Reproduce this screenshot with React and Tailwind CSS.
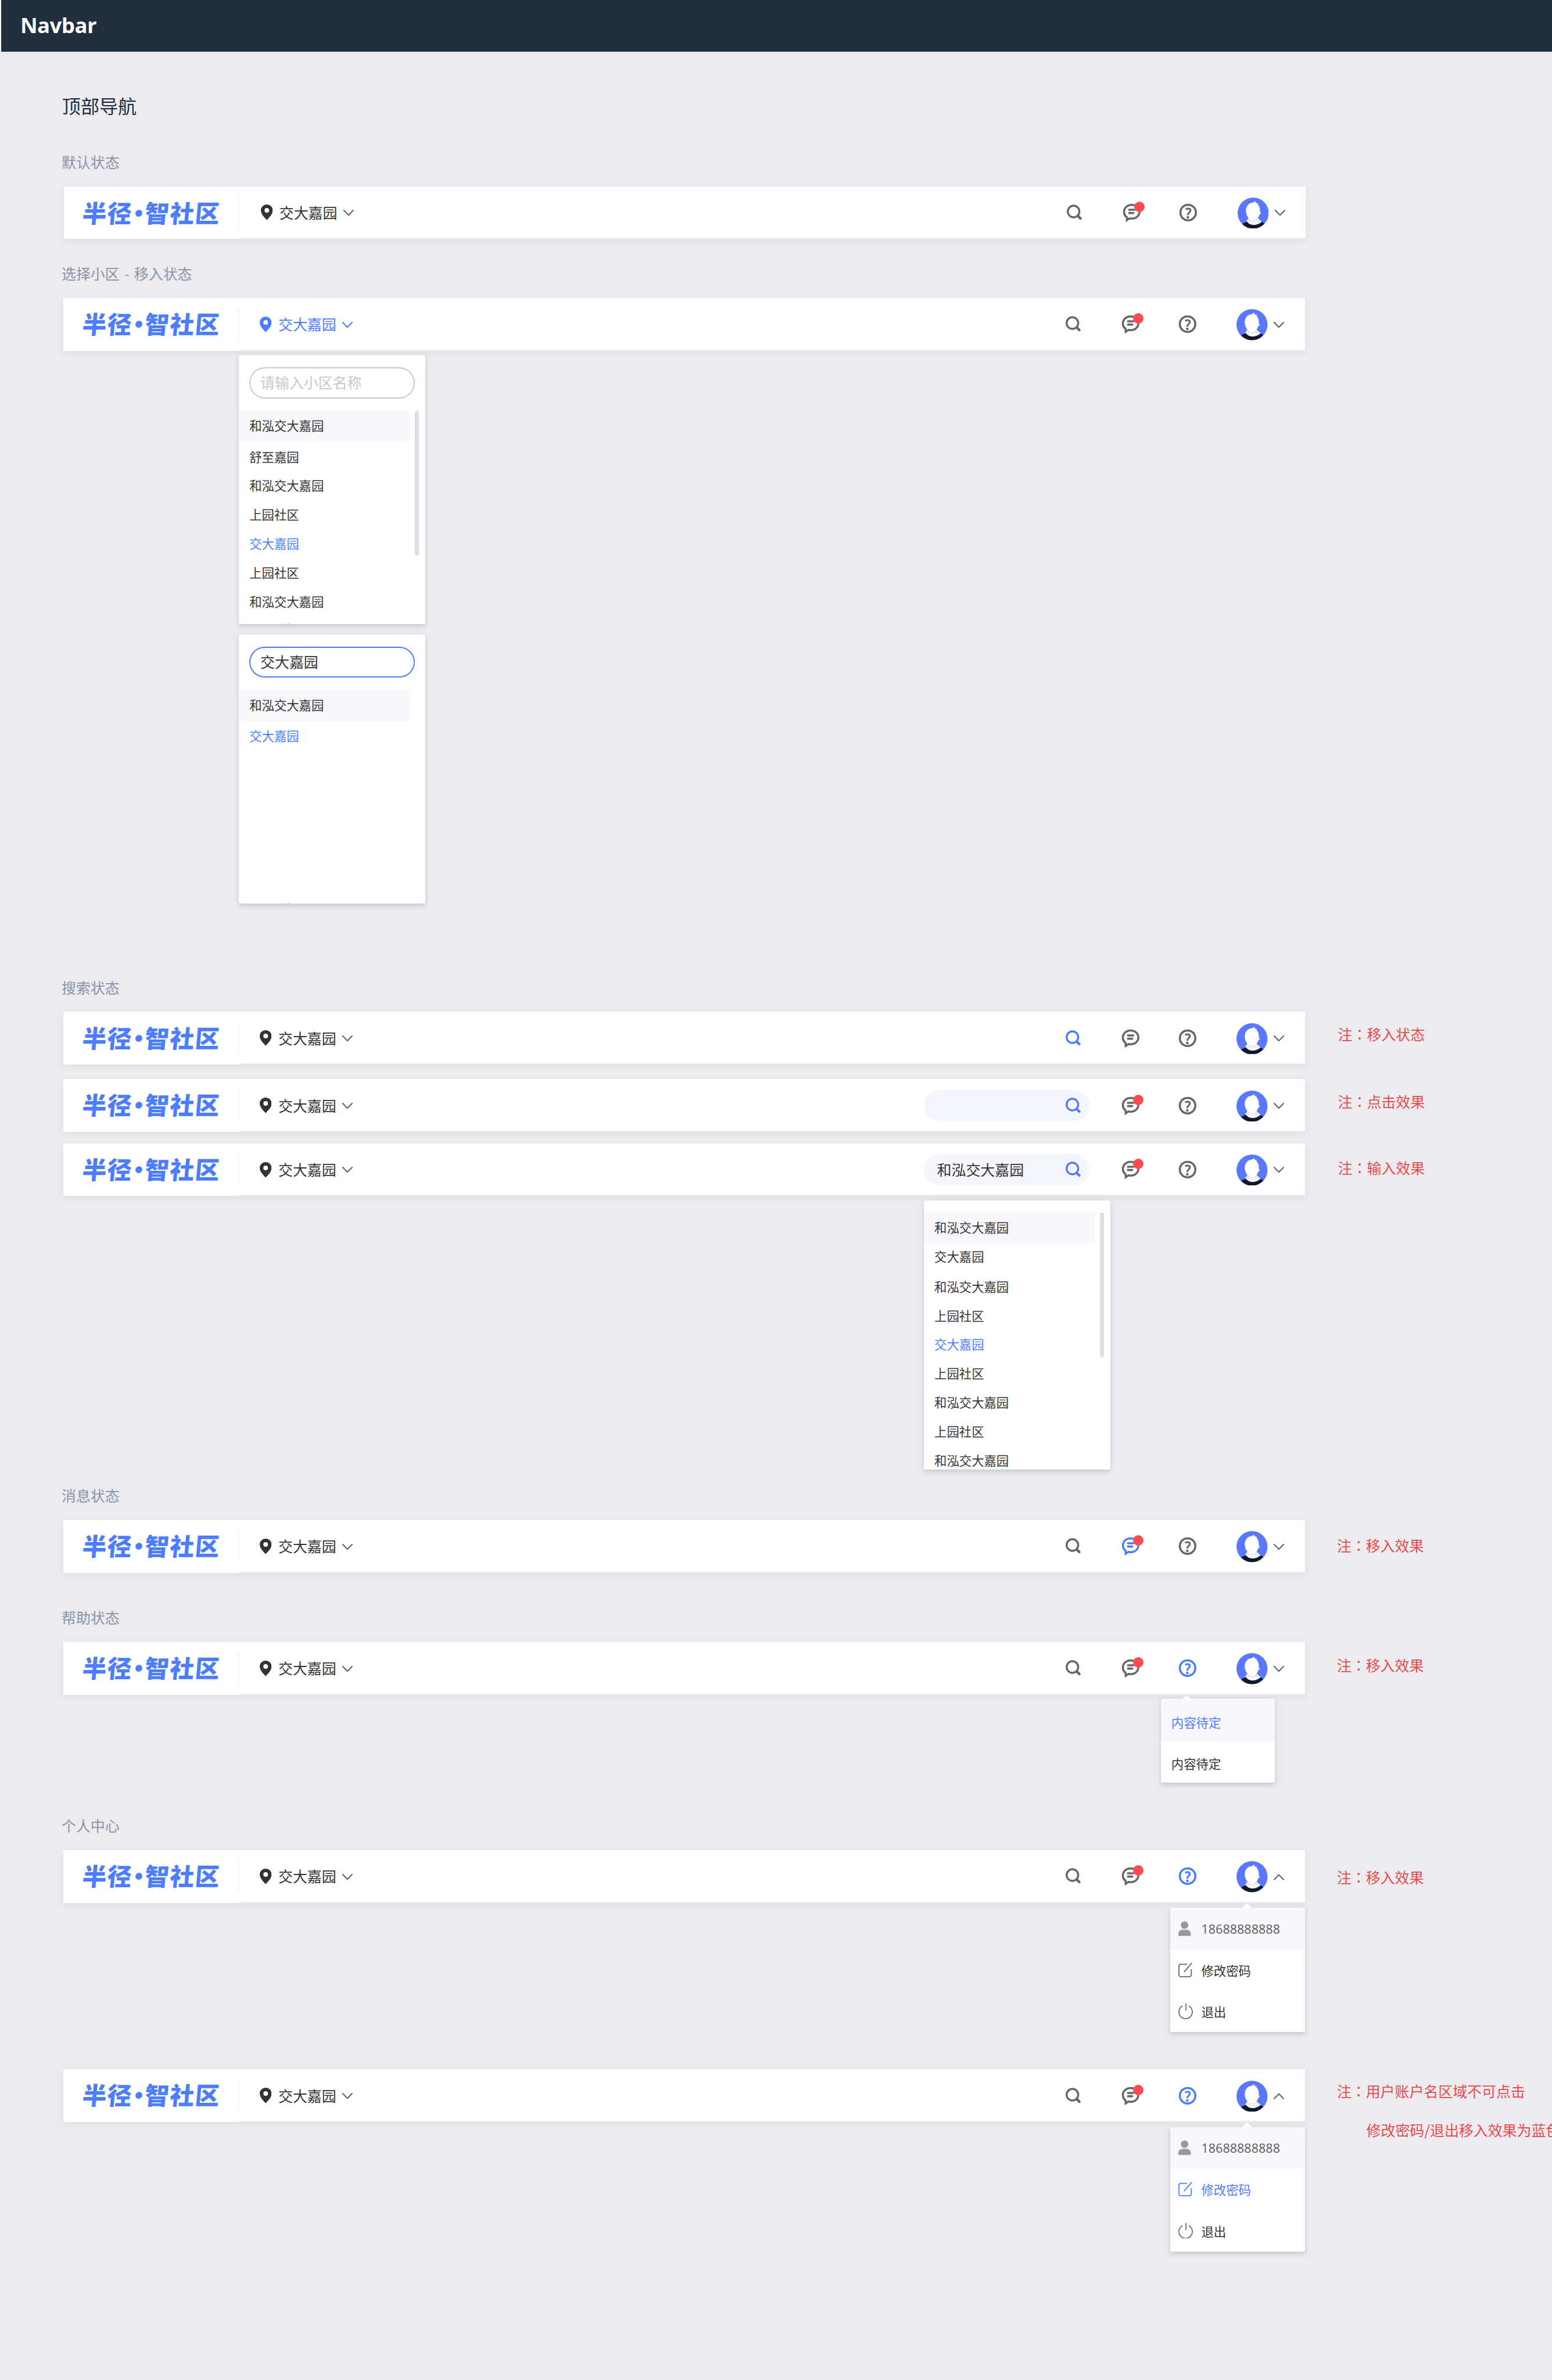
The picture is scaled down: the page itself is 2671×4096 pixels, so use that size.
import React from "react";
import { clsx } from "clsx";

const BLUE = "text-[#4c7dff]";

function PinIcon() {
  return (
    <svg width="23" height="30" viewBox="0 0 23 30" className="block shrink-0" fill="currentColor">
      <path
        fillRule="evenodd"
        d="M11.5 0C5 0 0 5 0 11.3C0 18.500 6.500 24.500 11.500 30C16.500 24.500 23 18.500 23 11.300C23 5 18 0 11.500 0ZM11.500 6.700A4.500 4.500 0 1 1 11.500 15.700A4.500 4.500 0 1 1 11.500 6.700Z"
      />
    </svg>
  );
}

function Chevron({ up }) {
  return (
    <svg
      width="20"
      height="12"
      viewBox="0 0 20 12"
      className={clsx("block shrink-0 overflow-visible", up && "rotate-180")}
      fill="none"
      stroke="currentColor"
      strokeWidth="2.4"
      strokeLinecap="round"
      strokeLinejoin="round"
    >
      <path d="M1 1L10 10.300L19 1" />
    </svg>
  );
}

function SearchIcon() {
  return (
    <svg width="40" height="40" viewBox="0 0 40 40" className="block shrink-0" fill="none" stroke="currentColor">
      <circle cx="18.7" cy="18" r="11.200" strokeWidth="3.800" />
      <path d="M27 26.500L32 31.500" strokeWidth="5" strokeLinecap="round" />
    </svg>
  );
}

function MessageIcon({ dot }) {
  return (
    <div className="relative size-[40px] shrink-0">
      <svg width="40" height="40" viewBox="0 0 40 40" className="block" fill="none">
        <path
          fill="currentColor"
          fillRule="evenodd"
          d="M20 3C29.400 3 37 9.800 37 18.500C37 27.200 29.400 33.800 20 33.600C18.600 33.600 17.300 33.500 16 33.300L8.500 38.500V30.200C5 27.500 3 23.500 3 18.500C3 9.800 10.600 3 20 3ZM20 6.900C12.800 6.900 7 12 7 18.500C7 22.500 8.800 25.900 12.300 28V31.100L15 29.300C16.600 29.600 18.300 29.800 20 29.800C27.200 29.800 33 25 33 18.500C33 12 27.200 6.900 20 6.900Z"
        />
        <path d="M14.800 14.700H25.200M14.800 20.900H23.200" stroke="currentColor" strokeWidth="4" strokeLinecap="round" />
      </svg>
      {dot && <span className="absolute left-[25px] top-[-1px] size-[20px] rounded-full bg-[#ff4b52]" />}
    </div>
  );
}

function HelpIcon() {
  return (
    <svg width="40" height="40" viewBox="0 0 40 40" className="block shrink-0" fill="none" stroke="currentColor">
      <circle cx="20" cy="20" r="15" strokeWidth="4" />
      <path d="M15.300 13.600C17 12.700 18.600 12.400 20 12.400C22.900 12.400 24.500 13.800 24.500 16C24.500 19.600 19.600 19.600 19.600 24.400V25" strokeWidth="3.500" />
      <circle cx="19.500" cy="29.200" r="2.500" fill="currentColor" stroke="none" />
    </svg>
  );
}

function Avatar() {
  return (
    <svg width="60" height="60" viewBox="0 0 60 60" className="block shrink-0">
      <defs>
        <clipPath id="avatar-round">
          <circle cx="30" cy="30" r="30" />
        </clipPath>
        <linearGradient id="avatar-neck" x1="0" y1="0" x2="0" y2="1">
          <stop offset="0" stopColor="#e2e2e4" />
          <stop offset="1" stopColor="#ffffff" />
        </linearGradient>
      </defs>
      <g clipPath="url(#avatar-round)">
        <rect width="60" height="60" fill="#5a78ff" />
        <path d="M21 39L16 46.800C20 51 25 53.500 31 53.300C38 53 43 50 47 47L38.500 39Z" fill="url(#avatar-neck)" />
        <path d="M34 53.500C38 51 42 50.500 46.500 46.800L48 49L40 54Z" fill="#5a78ff" />
        <path
          d="M30 9.800L30.200 7.800L32.200 9L34.300 6.500L35 10L36.500 11L38.200 9.300L38.800 13C41.500 16 43.200 20 43.200 24.500V28.600C44.800 28.300 45.400 30.500 44 31.600C43.500 32.200 42.600 32.200 42.300 32.200C40.800 38.500 36 43.500 30.200 43.500C22 43.500 16 35 16 25.500C16 16.500 22 9.800 30 9.800Z"
          fill="#ffffff"
        />
        <path d="M8 51L18 46.300C21 50.600 25.500 53 31.500 53C38 53 43.500 50.500 47 46.600L54 52L46 62H14Z" fill="#10182b" />
      </g>
    </svg>
  );
}

function Logo({ first }) {
  return (
    <div
      className={clsx(
        "flex h-[62px] w-[266px] shrink-0 -skew-x-[5deg] items-center whitespace-nowrap text-[47px] font-black leading-[62px] text-[#4c7dff]",
        first ? "ml-[36px]" : "ml-[38px]"
      )}
    >
      <span className="w-[98px] tracking-[1.500px]">半径</span>
      <span className="flex w-[24px] justify-center">·</span>
      <span className="tracking-[1.500px]">智社区</span>
    </div>
  );
}

function Navbar({ first, community, search, query, message, noDot, help, open }) {
  return (
    <div
      className={clsx(
        "flex h-[102px] w-[2400px] shrink-0 bg-white shadow-[0_4px_12px_rgba(60,60,80,0.08)]",
        first && "ml-[2px]"
      )}
    >
      <div className="flex w-[340px] shrink-0 items-start">
        <div className={first ? "mt-[19px]" : "mt-[17px]"}>
          <Logo first={first} />
        </div>
        <div className="ml-[34px] mt-[20px] h-[62px] w-[2px] bg-[#eeeeee]" />
      </div>
      <div className="flex flex-1 items-center border-b-[2.3px] border-[#eeeeee] pt-[2px] text-[#666666]">
        <div className={clsx("ml-[40px] flex items-center", community ? BLUE : "text-[#333333]")}>
          <PinIcon />
          <span className="ml-[13px] text-[28px] leading-[40px]">交大嘉园</span>
          <span className={clsx("ml-[12px] mt-[2px]", community ? BLUE : "text-[#666666]")}>
            <Chevron />
          </span>
        </div>
        <div
          className={clsx(
            "ml-auto flex h-[60px] w-[320px] items-center justify-between rounded-full pl-[25px] pr-[12px]",
            query !== undefined && "bg-[#f5f6fc]"
          )}
        >
          <span className="text-[28px] leading-[40px] text-[#333333]">{query}</span>
          <span className={clsx(search && (query === undefined ? BLUE : "text-[#5a78ff]"))}>
            <SearchIcon />
          </span>
        </div>
        <div className={clsx("ml-[59px]", message && BLUE)}>
          <MessageIcon dot={!noDot} />
        </div>
        <div className={clsx("ml-[70px]", help && BLUE)}>
          <HelpIcon />
        </div>
        <div className="ml-[75px] mt-[2px]">
          <Avatar />
        </div>
        <div className="ml-[12px] mr-[40px] mt-[2px]">
          <Chevron up={open} />
        </div>
      </div>
    </div>
  );
}

function Note({ className, children }) {
  return (
    <div className={clsx("shrink-0 whitespace-nowrap text-[28px] leading-[40px] text-[#e64c4c]", className)}>
      <span>注</span>
      <span className="font-['Noto_Sans_CJK_TC',sans-serif]">：</span>
      {children}
    </div>
  );
}

function Label({ className, children }) {
  return (
    <h2 className={clsx("ml-[-3px] h-[40px] text-[28px] leading-[38px] text-[#8995a6] [word-spacing:3px]", className)}>
      {children}
    </h2>
  );
}

function Row({ className, children }) {
  return <div className={clsx("flex h-[102px] items-start", className)}>{children}</div>;
}

const PANEL = "rounded-[4px] bg-white shadow-[0_4px_10px_rgba(40,40,60,0.18)]";

function ListPanel({ className, items, scroll, tail, children }) {
  return (
    <div className={clsx("flex h-[520px] w-[360px] flex-col overflow-hidden", PANEL, className)}>
      {children}
      <div className="mt-[24px] flex min-h-0 flex-1 items-start">
        <ul className="w-[330px] text-[24px] text-[#333333]">
          {items.map((item, i) => (
            <li
              key={i}
              className={clsx(
                "flex items-center pb-[3px] pl-[20px]",
                i === 0 ? "h-[60px] bg-[#f7f7fc]" : "h-[56px]",
                item.shift,
                item.active && BLUE
              )}
            >
              {item.name}
            </li>
          ))}
          {tail && <li className={clsx("pl-[20px] text-[28px] leading-[40px]", tail)}>上园社区</li>}
        </ul>
        {scroll && <div className="ml-[10px] h-[280px] w-[8px] rounded-full bg-[#dedee3]" />}
      </div>
    </div>
  );
}

function Field({ filled, children }) {
  return (
    <div
      className={clsx(
        "ml-[20px] mt-[24px] flex h-[60px] w-[320px] shrink-0 items-center rounded-full border-[2.3px] pb-[2px] pl-[19px] text-[28px]",
        filled ? "border-[#4c7dff] text-[#333333]" : "border-[#c8c9cc] text-[#c8c9cc]"
      )}
    >
      {children}
    </div>
  );
}

function UserIcon() {
  return (
    <svg width="28" height="30" viewBox="0 0 28 30" className="block shrink-0" fill="#999999">
      <ellipse cx="12" cy="8" rx="7.200" ry="7.200" />
      <path d="M0 27V25C0 20 3.500 17 8 17H16C20.500 17 24 20 24 25V27C24 28.200 23.500 29 22.300 29H1.700C0.500 29 0 28.200 0 27Z" />
    </svg>
  );
}

function EditIcon() {
  return (
    <svg width="28" height="30" viewBox="0 0 28 30" className="block shrink-0" fill="none" stroke="currentColor" strokeWidth="2">
      <path d="M17 4H5C2.500 4 1 5.500 1 8V24C1 26.500 2.500 28 5 28H21C23.500 28 25 26.500 25 24V13.500" />
      <path d="M11 19L26 1.500" />
    </svg>
  );
}

function PowerIcon() {
  return (
    <svg width="28" height="30" viewBox="0 0 28 30" className="block shrink-0" fill="none" stroke="currentColor" strokeWidth="1.900">
      <path d="M8 4.800A13 13 0 1 0 20 4.800" />
      <path d="M14.700 0V13.500" />
    </svg>
  );
}

function UserPanel({ active }) {
  return (
    <div className={clsx("relative ml-[2140px] mt-[10px] h-[240px] w-[260px] text-[24px] text-[#333333]", PANEL, "rounded-t-none")}>
      <svg width="20" height="10" viewBox="0 0 20 10" className="absolute left-[138px] top-[-10px]">
        <path d="M10 0L20 10H0Z" fill="#ffffff" />
      </svg>
      <div className="flex h-[80px] items-center bg-[#f7f7fc] pl-[16px]">
        <UserIcon />
        <span className="ml-[16px] pt-[2px] font-['Noto_Sans',sans-serif] text-[24.200px] text-[#666666]">18688888888</span>
      </div>
      <div className={clsx("flex h-[80px] items-center pl-[16px]", active && BLUE)}>
        <span className={clsx(!active && "text-[#666666]")}>
          <EditIcon />
        </span>
        <span className="ml-[16px] pt-[1px]">修改密码</span>
      </div>
      <div className="flex h-[80px] items-center pl-[16px]">
        <span className="text-[#666666]">
          <PowerIcon />
        </span>
        <span className="ml-[16px] pt-[2px]">退出</span>
      </div>
    </div>
  );
}

const COMMUNITIES = [
  { name: "和泓交大嘉园" },
  { name: "舒至嘉园", shift: "mt-[2px]" },
  { name: "和泓交大嘉园" },
  { name: "上园社区" },
  { name: "交大嘉园", active: true },
  { name: "上园社区" },
  { name: "和泓交大嘉园" },
];

const FILTERED = [{ name: "和泓交大嘉园" }, { name: "交大嘉园", active: true, shift: "mt-[2px]" }];

const RESULTS = [
  { name: "和泓交大嘉园" },
  { name: "交大嘉园", shift: "mt-[-2px]" },
  { name: "和泓交大嘉园", shift: "mt-[2px]" },
  { name: "上园社区" },
  { name: "交大嘉园", active: true },
  { name: "上园社区" },
  { name: "和泓交大嘉园" },
  { name: "上园社区" },
  { name: "和泓交大嘉园" },
];

export default function App() {
  return (
    <div className="h-[4096px] w-[2671px] overflow-hidden bg-[#ebebf0]">
      <div className="flex h-[4601px] w-[3001px] flex-col overflow-hidden bg-[#ebebf0] font-['Noto_Sans_CJK_SC',sans-serif] [zoom:0.8904]">
        <header className="flex h-[100px] shrink-0 items-center border-l-[2.3px] border-white bg-[#222e3e] pl-[37px]">
          <h1 className="pb-[2px] font-['Open_Sans',sans-serif] text-[41px] font-bold leading-[56px] tracking-[-0.600px] text-white">
            Navbar
          </h1>
        </header>
        <main className="flex flex-col pl-[122px]">
          <h2 className="ml-[-2px] mt-[80px] h-[50px] text-[36px] leading-[48px] text-[#222e3e]">顶部导航</h2>

          <Label className="mb-[26px] mt-[64px]">默认状态</Label>
          <Row>
            <Navbar first />
          </Row>

          <Label className="mb-[26px] mt-[48px]">选择小区 - 移入状态</Label>
          <Row>
            <Navbar community />
          </Row>
          <ListPanel className="ml-[340px] mt-[8px]" items={COMMUNITIES} scroll tail="mt-[7px]">
            <Field>请输入小区名称</Field>
          </ListPanel>
          <ListPanel className="ml-[340px] mt-[20px]" items={FILTERED} tail="mt-[287px]">
            <Field filled>交大嘉园</Field>
          </ListPanel>

          <Label className="mb-[26px] mt-[144px]">搜索状态</Label>
          <Row>
            <Navbar search noDot />
            <Note className="ml-[64px] mt-[23px]">移入状态</Note>
          </Row>
          <Row className="mt-[28px]">
            <Navbar search query="" />
            <Note className="ml-[64px] mt-[23px]">点击效果</Note>
          </Row>
          <Row className="mt-[22px]">
            <Navbar search query="和泓交大嘉园" />
            <Note className="ml-[64px] mt-[27px]">输入效果</Note>
          </Row>
          <ListPanel className="ml-[1664px] mt-[8px]" items={RESULTS} scroll />

          <Label className="mb-[26px] mt-[32px]">消息状态</Label>
          <Row>
            <Navbar message />
            <Note className="ml-[62px] mt-[29px]">移入效果</Note>
          </Row>

          <Label className="mb-[26px] mt-[68px]">帮助状态</Label>
          <Row>
            <Navbar help />
            <Note className="ml-[62px] mt-[25px]">移入效果</Note>
          </Row>
          <div className={clsx("relative ml-[2122px] mt-[8px] h-[162px] w-[220px] pt-[2px] text-[24px]", PANEL)}>
            <svg width="16" height="8" viewBox="0 0 16 8" className="absolute left-[42px] top-[-8px]">
              <path d="M8 0L16 8H0Z" fill="#ffffff" />
            </svg>
            <div className="flex h-[80px] items-center bg-[#f7f7fc] pl-[20px] pt-[6px] text-[#4c7dff]">内容待定</div>
            <div className="flex h-[80px] items-center pl-[20px] pt-[6px] text-[#333333]">内容待定</div>
          </div>

          <Label className="mb-[26px] mt-[64px]">个人中心</Label>
          <Row>
            <Navbar help open />
            <Note className="ml-[62px] mt-[33px]">移入效果</Note>
          </Row>
          <UserPanel />

          <Row className="mt-[72px]">
            <Navbar help open />
            <div className="ml-[62px] mt-[22px] shrink-0">
              <Note>用户账户名区域不可点击</Note>
              <p className="ml-[57px] mt-[36px] whitespace-nowrap text-[28px] leading-[40px] text-[#e64c4c]">
                修改密码/退出移入效果为蓝色
              </p>
            </div>
          </Row>
          <UserPanel active />
        </main>
      </div>
    </div>
  );
}
